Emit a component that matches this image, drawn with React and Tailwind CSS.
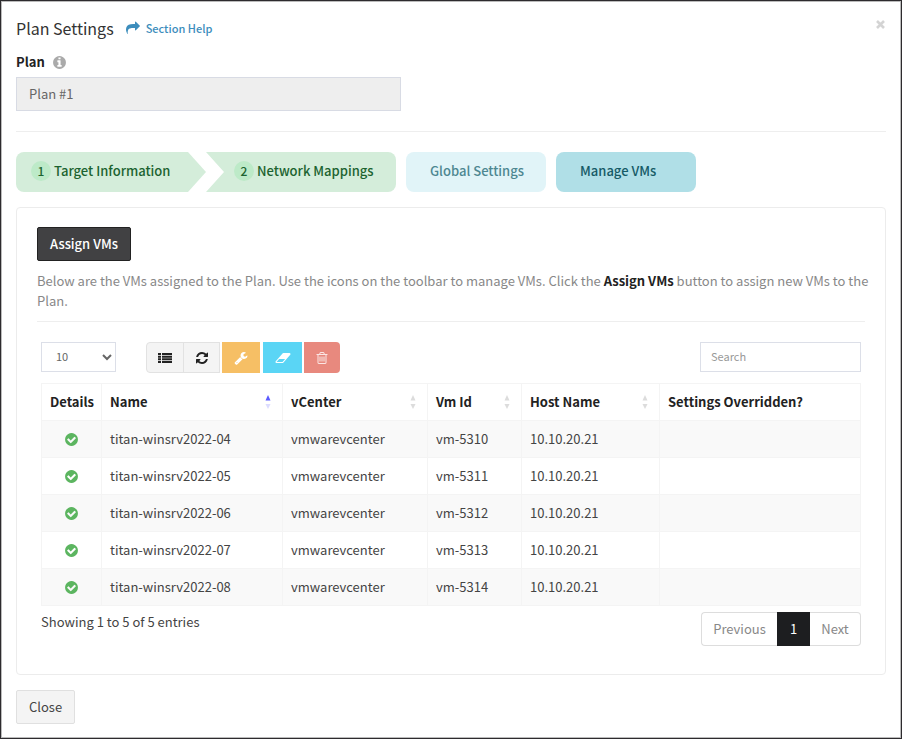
const icons = {
  share: [1792, 'M1792 640q0 26-19 45l-512 512q-19 19-45 19t-45-19-19-45v-256h-224q-98 0-175.5 6t-154 21.5-133 42.5-105.5 69.5-80 101-48.5 138.5-17.5 181q0 55 5 123 0 6 2.5 23.5t2.5 26.5q0 15-8.5 25t-23.5 10q-16 0-28-17-7-9-13-22t-13.5-30-10.5-24q-127-285-127-451 0-199 53-333 162-403 875-403h224v-256q0-26 19-45t45-19 45 19l512 512q19 19 19 45z'],
  info: [1792, 'M1152 1376v-160q0-14-9-23t-23-9h-96v-512q0-14-9-23t-23-9h-320q-14 0-23 9t-9 23v160q0 14 9 23t23 9h96v320h-96q-14 0-23 9t-9 23v160q0 14 9 23t23 9h448q14 0 23-9t9-23zm-128-896v-160q0-14-9-23t-23-9h-192q-14 0-23 9t-9 23v160q0 14 9 23t23 9h192q14 0 23-9t9-23zm640 416q0 209-103 385.5t-279.5 279.5-385.5 103-385.5-103-279.5-279.5-103-385.5 103-385.5 279.5-279.5 385.5-103 385.5 103 279.5 279.5 103 385.5z'],
  check: [1792, 'M1412 734q0-28-18-46l-91-90q-19-19-45-19t-45 19l-408 407-226-226q-19-19-45-19t-45 19l-91 90q-18 18-18 46 0 27 18 45l362 362q19 19 45 19 27 0 46-19l543-543q18-18 18-45zm252 162q0 209-103 385.5t-279.5 279.5-385.5 103-385.5-103-279.5-279.5-103-385.5 103-385.5 279.5-279.5 385.5-103 385.5 103 279.5 279.5 103 385.5z'],
  list: [1792, 'M0 256h384v256h-384zM512 256h1280v256h-1280zM0 598h384v256h-384zM512 598h1280v256h-1280zM0 940h384v256h-384zM512 940h1280v256h-1280zM0 1280h384v256h-384zM512 1280h1280v256h-1280z'],
  refresh: [1792, 'M1639 1056q0 5-1 7-64 268-268 434.5t-478 166.5q-146 0-282.5-55t-243.5-157l-129 129q-19 19-45 19t-45-19-19-45v-448q0-26 19-45t45-19h448q26 0 45 19t19 45-19 45l-137 137q71 66 161 102t187 36q134 0 250-65t186-179q11-17 53-117 8-23 30-23h192q13 0 22.5 9.5t9.5 22.5zm25-800v448q0 26-19 45t-45 19h-448q-26 0-45-19t-19-45 19-45l138-138q-148-137-349-137-134 0-250 65t-186 179q-11 17-53 117-8 23-30 23h-199q-13 0-22.5-9.5t-9.5-22.5v-7q65-268 270-434.5t480-166.5q146 0 284 55.5t245 156.5l130-129q19-19 45-19t45 19 19 45z'],
  wrench: [1792, 'M448 1472q0-26-19-45t-45-19-45 19-19 45 19 45 45 19 45-19 19-45zm644-420l-682 682q-37 37-90 37-52 0-91-37l-106-108q-38-36-38-90 0-53 38-91l681-681q39 98 114.5 173.5t173.5 114.5zm634-435q0 39-23 106-47 134-164.5 217.5t-258.5 83.5q-185 0-316.5-131.5t-131.5-316.5 131.5-316.5 316.5-131.5q58 0 121.5 16.5t107.5 46.5q16 11 16 28t-16 28l-293 169v224l193 107q5-3 79-48.5t135.5-81 70.5-35.5q15 0 23.5 10t8.5 25z'],
  eraser: [2048, 'M960 1408l336-384h-768l-336 384h768zm1013-1077q15 34 9.5 71.5t-30.5 65.5l-896 1024q-38 44-96 44h-768q-38 0-69.5-20.5t-47.5-54.5q-15-34-9.5-71.5t30.5-65.5l896-1024q38-44 96-44h768q38 0 69.5 20.5t47.5 54.5z'],
  trash: [1792, 'M704 736v576q0 14-9 23t-23 9h-64q-14 0-23-9t-9-23v-576q0-14 9-23t23-9h64q14 0 23 9t9 23zm256 0v576q0 14-9 23t-23 9h-64q-14 0-23-9t-9-23v-576q0-14 9-23t23-9h64q14 0 23 9t9 23zm256 0v576q0 14-9 23t-23 9h-64q-14 0-23-9t-9-23v-576q0-14 9-23t23-9h64q14 0 23 9t9 23zm128 724v-948h-896v948q0 22 7 40.5t14.5 27 10.5 8.5h832q3 0 10.5-8.5t14.5-27 7-40.5zm-672-1076h448l-48-117q-7-9-17-11h-317q-10 2-17 11zm928 32v64q0 14-9 23t-23 9h-96v948q0 83-47 143.5t-113 60.5h-832q-66 0-113-58.5t-47-141.5v-952h-96q-14 0-23-9t-9-23v-64q0-14 9-23t23-9h309l70-167q15-37 54-63t79-26h320q40 0 79 26t54 63l70 167h309q14 0 23 9t9 23z'],
};

function Icon({ name, className }) {
  const [width, d] = icons[name];
  return (
    <svg viewBox={`0 0 ${width} 1792`} fill="currentColor" aria-hidden="true" className={className}>
      <path d={d} />
    </svg>
  );
}

const columns = [
  { label: 'Details', width: 'w-[60px]' },
  { label: 'Name', width: 'w-[181px]', sort: 'asc' },
  { label: 'vCenter', width: 'w-[145px]', sort: 'none' },
  { label: 'Vm Id', width: 'w-[94px]', sort: 'none' },
  { label: 'Host Name', width: 'w-[138px]', sort: 'none' },
  { label: 'Settings Overridden?', width: '' },
];

const vms = [
  { name: 'titan-winsrv2022-04', vcenter: 'vmwarevcenter', id: 'vm-5310', host: '10.10.20.21' },
  { name: 'titan-winsrv2022-05', vcenter: 'vmwarevcenter', id: 'vm-5311', host: '10.10.20.21' },
  { name: 'titan-winsrv2022-06', vcenter: 'vmwarevcenter', id: 'vm-5312', host: '10.10.20.21' },
  { name: 'titan-winsrv2022-07', vcenter: 'vmwarevcenter', id: 'vm-5313', host: '10.10.20.21' },
  { name: 'titan-winsrv2022-08', vcenter: 'vmwarevcenter', id: 'vm-5314', host: '10.10.20.21' },
];

function SortArrows({ active }) {
  return (
    <svg viewBox="0 0 6 14" aria-hidden="true" className="mr-[3px] h-3.5 w-1.5 shrink-0">
      <path d="M3 0L5.5 5.5H0.5z" fill={active ? '#5b5bff' : '#dcdcdc'} />
      <path d="M3 14L5.5 9H0.5z" fill={active ? '#dcdcff' : '#dcdcdc'} />
    </svg>
  );
}

function StepNumber({ children }) {
  return (
    <span className="flex size-5 items-center justify-center rounded-full bg-[#bdeac8] text-xs leading-5">
      {children}
    </span>
  );
}

function Steps() {
  return (
    <nav className="flex h-10 font-medium text-[#1c6330]">
      <button className="flex w-[190px] items-center gap-[3px] rounded-l-lg bg-[#d4edda] pb-0.5 pl-[15px] [clip-path:polygon(0_0,calc(100%-18px)_0,100%_50%,calc(100%-18px)_100%,0_100%)]">
        <StepNumber>1</StepNumber>
        Target Information
      </button>
      <button className="flex w-[190px] items-center gap-[3px] rounded-r-lg bg-[#d4edda] pb-0.5 pl-7 [clip-path:polygon(0_0,100%_0,100%_100%,0_100%,18px_50%)]">
        <StepNumber>2</StepNumber>
        Network Mappings
      </button>
      <button className="ml-2.5 w-[140px] rounded-lg bg-[#e1f4f8] pb-0.5 pl-6 text-left text-[#4d8791]">
        Global Settings
      </button>
      <button className="ml-2.5 w-[140px] rounded-lg bg-[#b0dfe7] pb-0.5 pl-6 text-left text-[#155a66]">
        Manage VMs
      </button>
    </nav>
  );
}

function Toolbar() {
  return (
    <div className="flex items-start justify-between">
      <div className="flex">
        <select
          aria-label="Entries per page"
          defaultValue="10"
          className="h-[30px] w-[75px] border border-[#dcdfe8] bg-white pb-0.5 pl-2.5 text-[11px] text-[#666]"
        >
          <option>10</option>
          <option>25</option>
          <option>50</option>
        </select>
        <div className="ml-[30px] flex h-[31px] text-[#222]">
          <button aria-label="Columns" className="flex w-[38px] items-center justify-center rounded-l-sm border border-[#e2e2e2] bg-[#f4f4f4]">
            <Icon name="list" className="size-3.5" />
          </button>
          <button aria-label="Refresh" className="-ml-px flex w-[37px] items-center justify-center border border-[#e2e2e2] bg-[#f4f4f4]">
            <Icon name="refresh" className="size-3.5" />
          </button>
        </div>
        <div className="ml-0.5 flex h-[31px] text-white">
          <button aria-label="Override settings" className="flex w-[38px] items-center justify-center bg-[#f6bf65]">
            <Icon name="wrench" className="size-3.5" />
          </button>
          <button aria-label="Clear" className="ml-[3px] flex w-[39px] items-center justify-center bg-[#5ad5f5]">
            <Icon name="eraser" className="h-3.5 w-4" />
          </button>
          <button aria-label="Delete" className="ml-0.5 flex w-9 items-center justify-center rounded-r-sm bg-[#e8897e] text-[#fbe6e4]">
            <Icon name="trash" className="size-3.5" />
          </button>
        </div>
      </div>
      <input
        type="search"
        aria-label="Search"
        placeholder="Search"
        className="h-[30px] w-[161px] border border-[#dcdfe8] px-2.5 pb-0.5 text-[11px] placeholder:text-[#999]"
      />
    </div>
  );
}

function VmTable() {
  return (
    <table className="mt-2.5 w-full table-fixed border-collapse text-left text-[13px] leading-5 text-[#444]">
      <thead>
        <tr className="h-[37px]">
          {columns.map((col) => (
            <th key={col.label} className={`border border-[#f4f4f4] px-2 py-0 font-bold text-[#222] ${col.width}`}>
              <div className="flex items-center justify-between whitespace-nowrap">
                {col.label}
                {col.sort && <SortArrows active={col.sort === 'asc'} />}
              </div>
            </th>
          ))}
        </tr>
      </thead>
      <tbody>
        {vms.map((vm) => (
          <tr key={vm.id} className="h-[37px] odd:bg-[#f9f9f9]">
            <td className="border border-[#f4f4f4] p-0">
              <Icon name="check" className="mx-auto size-[15px] text-[#5cb560]" />
            </td>
            <td className="border border-[#f4f4f4] px-2 py-0">{vm.name}</td>
            <td className="border border-[#f4f4f4] px-2 py-0">{vm.vcenter}</td>
            <td className="border border-[#f4f4f4] px-2 py-0">{vm.id}</td>
            <td className="border border-[#f4f4f4] px-2 py-0">{vm.host}</td>
            <td className="border border-[#f4f4f4] px-2 py-0" />
          </tr>
        ))}
      </tbody>
    </table>
  );
}

export default function App() {
  return (
    <div className="flex min-h-screen flex-col bg-[#2d2b2e] p-px font-['Noto_Sans_CJK_SC',sans-serif] text-[13px] leading-5 text-[#444]">
      <div className="grow border border-[#bbb] bg-white px-3.5 pt-3.5 pb-3">
        <header className="flex items-start justify-between">
          <div className="flex items-center gap-3">
            <h1 className="text-base leading-6 text-[#333]">Plan Settings</h1>
            <a href="#help" className="flex items-center gap-1.5 text-[11px] leading-6 font-medium text-[#3c8dbc]">
              <Icon name="share" className="size-3.5" />
              Section Help
            </a>
          </div>
          <button aria-label="Dismiss" className="p-px pt-1 text-[#d4d4d4]">
            <svg viewBox="0 0 9 9" fill="none" stroke="currentColor" strokeWidth="2.6" className="size-[9px]">
              <path d="M1 1l7 7M8 1l-7 7" />
            </svg>
          </button>
        </header>

        <div className="mt-3 flex items-center gap-[7px]">
          <label htmlFor="plan" className="font-bold text-[#222]">Plan</label>
          <Icon name="info" className="size-[15px] text-[#aaa]" />
        </div>
        <input
          id="plan"
          readOnly
          value="Plan #1"
          className="mt-[5px] block h-[34px] w-[385px] max-w-full border border-[#d8dbe4] bg-[#eee] px-3 pb-0.5 text-[#666]"
        />
        <hr className="mt-5 mb-5 border-[#eee]" />

        <Steps />

        <section className="mt-[15px] rounded-sm border border-[#ececec] px-5 pt-[19px] pb-7">
          <button className="h-[34px] rounded-xs border border-[#222] bg-[#414143] px-3 font-medium text-white">
            Assign VMs
          </button>
          <p className="-mr-2.5 mt-2.5 text-[#888]">
            Below are the VMs assigned to the Plan. Use the icons on the toolbar to manage VMs. Click the{' '}
            <strong className="text-[#222]">Assign VMs</strong> button to assign new VMs to the Plan.
          </p>
          <hr className="mt-2.5 mb-5 border-[#eee]" />
          <div className="px-1">
            <Toolbar />
            <VmTable />
            <div className="mt-1.5 flex items-start justify-between">
              <p>Showing 1 to 5 of 5 entries</p>
              <div className="flex h-[34px] text-[#888]">
                <button className="w-[76px] rounded-l-sm border border-r-0 border-[#ddd]">Previous</button>
                <button className="w-[33px] bg-[#1d1e20] text-white">1</button>
                <button className="w-[51px] rounded-r-sm border border-l-0 border-[#ddd]">Next</button>
              </div>
            </div>
          </div>
        </section>

        <button className="mt-[15px] h-[34px] rounded-xs border border-[#e0e0e0] bg-[#f4f4f4] px-3">Close</button>
      </div>
    </div>
  );
}
